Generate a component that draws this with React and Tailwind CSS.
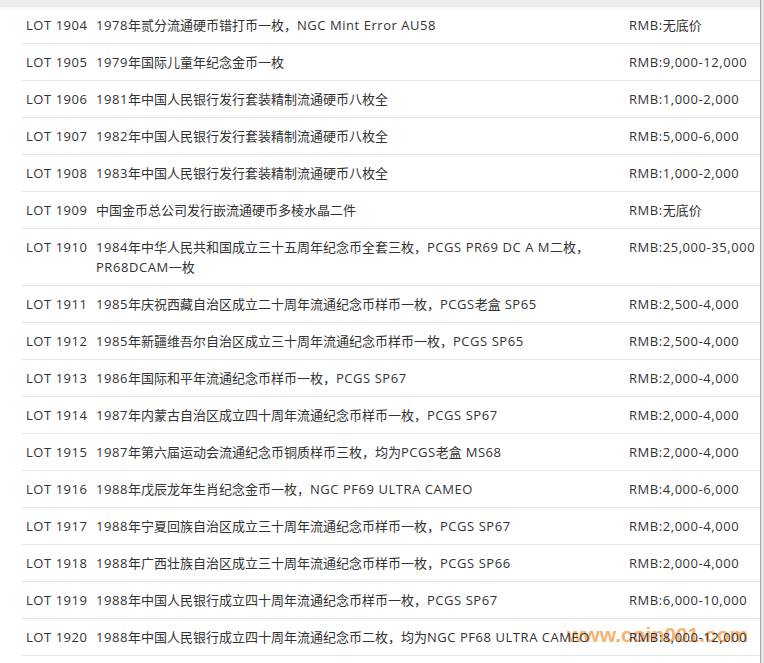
import React from "react";

const rows = [
  ["LOT 1904", "1978年贰分流通硬币错打币一枚，NGC Mint Error AU58", "RMB:无底价"],
  ["LOT 1905", "1979年国际儿童年纪念金币一枚", "RMB:9,000-12,000"],
  ["LOT 1906", "1981年中国人民银行发行套装精制流通硬币八枚全", "RMB:1,000-2,000"],
  ["LOT 1907", "1982年中国人民银行发行套装精制流通硬币八枚全", "RMB:5,000-6,000"],
  ["LOT 1908", "1983年中国人民银行发行套装精制流通硬币八枚全", "RMB:1,000-2,000"],
  ["LOT 1909", "中国金币总公司发行嵌流通硬币多棱水晶二件", "RMB:无底价"],
  ["LOT 1910", "1984年中华人民共和国成立三十五周年纪念币全套三枚，PCGS PR69 DC A M二枚，PR68DCAM一枚", "RMB:25,000-35,000"],
  ["LOT 1911", "1985年庆祝西藏自治区成立二十周年流通纪念币样币一枚，PCGS老盒 SP65", "RMB:2,500-4,000"],
  ["LOT 1912", "1985年新疆维吾尔自治区成立三十周年流通纪念币样币一枚，PCGS SP65", "RMB:2,500-4,000"],
  ["LOT 1913", "1986年国际和平年流通纪念币样币一枚，PCGS SP67", "RMB:2,000-4,000"],
  ["LOT 1914", "1987年内蒙古自治区成立四十周年流通纪念币样币一枚，PCGS SP67", "RMB:2,000-4,000"],
  ["LOT 1915", "1987年第六届运动会流通纪念币铜质样币三枚，均为PCGS老盒 MS68", "RMB:2,000-4,000"],
  ["LOT 1916", "1988年戊辰龙年生肖纪念金币一枚，NGC PF69 ULTRA CAMEO", "RMB:4,000-6,000"],
  ["LOT 1917", "1988年宁夏回族自治区成立三十周年流通纪念币样币一枚，PCGS SP67", "RMB:2,000-4,000"],
  ["LOT 1918", "1988年广西壮族自治区成立三十周年流通纪念币样币一枚，PCGS SP66", "RMB:2,000-4,000"],
  ["LOT 1919", "1988年中国人民银行成立四十周年流通纪念币样币一枚，PCGS SP67", "RMB:6,000-10,000"],
  ["LOT 1920", "1988年中国人民银行成立四十周年流通纪念币二枚，均为NGC PF68 ULTRA CAMEO", "RMB:8,000-12,000"],
];

function Mixed({ text }) {
  const parts = text.split(/([\u3000-\u9fff\uff00-\uffef]+)/).filter(Boolean);
  return parts.map((p, i) =>
    /[\u3000-\u9fff\uff00-\uffef]/.test(p) ? (
      <span key={i}>{p}</span>
    ) : (
      <span key={i} className="tracking-[0.55px]">{p}</span>
    )
  );
}

export default function App() {
  return (
    <div
      className="relative isolate w-[764px] h-[663px] overflow-hidden bg-white text-[13px] leading-[20px] text-[#333]"
      style={{ fontFamily: '"Open Sans", "Noto Sans CJK SC", sans-serif' }}
    >
      <div
        className="absolute z-0 left-[567px] top-[623px] text-[21px] leading-[24px] font-bold text-[#f5a04c] opacity-80"
        style={{ fontFamily: '"Liberation Sans", sans-serif' }}
      >
        www.coin001.com
      </div>
      <div className="relative z-10 flex h-full">
        <div className="flex flex-col w-[760px]">
          <div className="h-[7px] bg-[#ececec] shadow-[0_2px_3px_rgba(0,0,0,0.04)]" />
          <div className="ml-[22px] w-[738px]">
            {rows.map((r) => (
              <div key={r[0]} className="flex border-b border-[#e6e6e6] py-[8px]">
                <div className="w-[74px] shrink-0 pl-[4px] whitespace-nowrap">
                  <Mixed text={r[0]} />
                </div>
                <div className="w-[533px] shrink-0 pr-[4px]">
                  <Mixed text={r[1]} />
                </div>
                <div className="flex-1 whitespace-nowrap">
                  <Mixed text={r[2]} />
                </div>
              </div>
            ))}
          </div>
        </div>
        <div className="w-[4px] flex">
          <div className="w-[1px] bg-[#a8a8a8]" />
          <div className="flex-1 bg-[#e2e2e2]" />
        </div>
      </div>
    </div>
  );
}
